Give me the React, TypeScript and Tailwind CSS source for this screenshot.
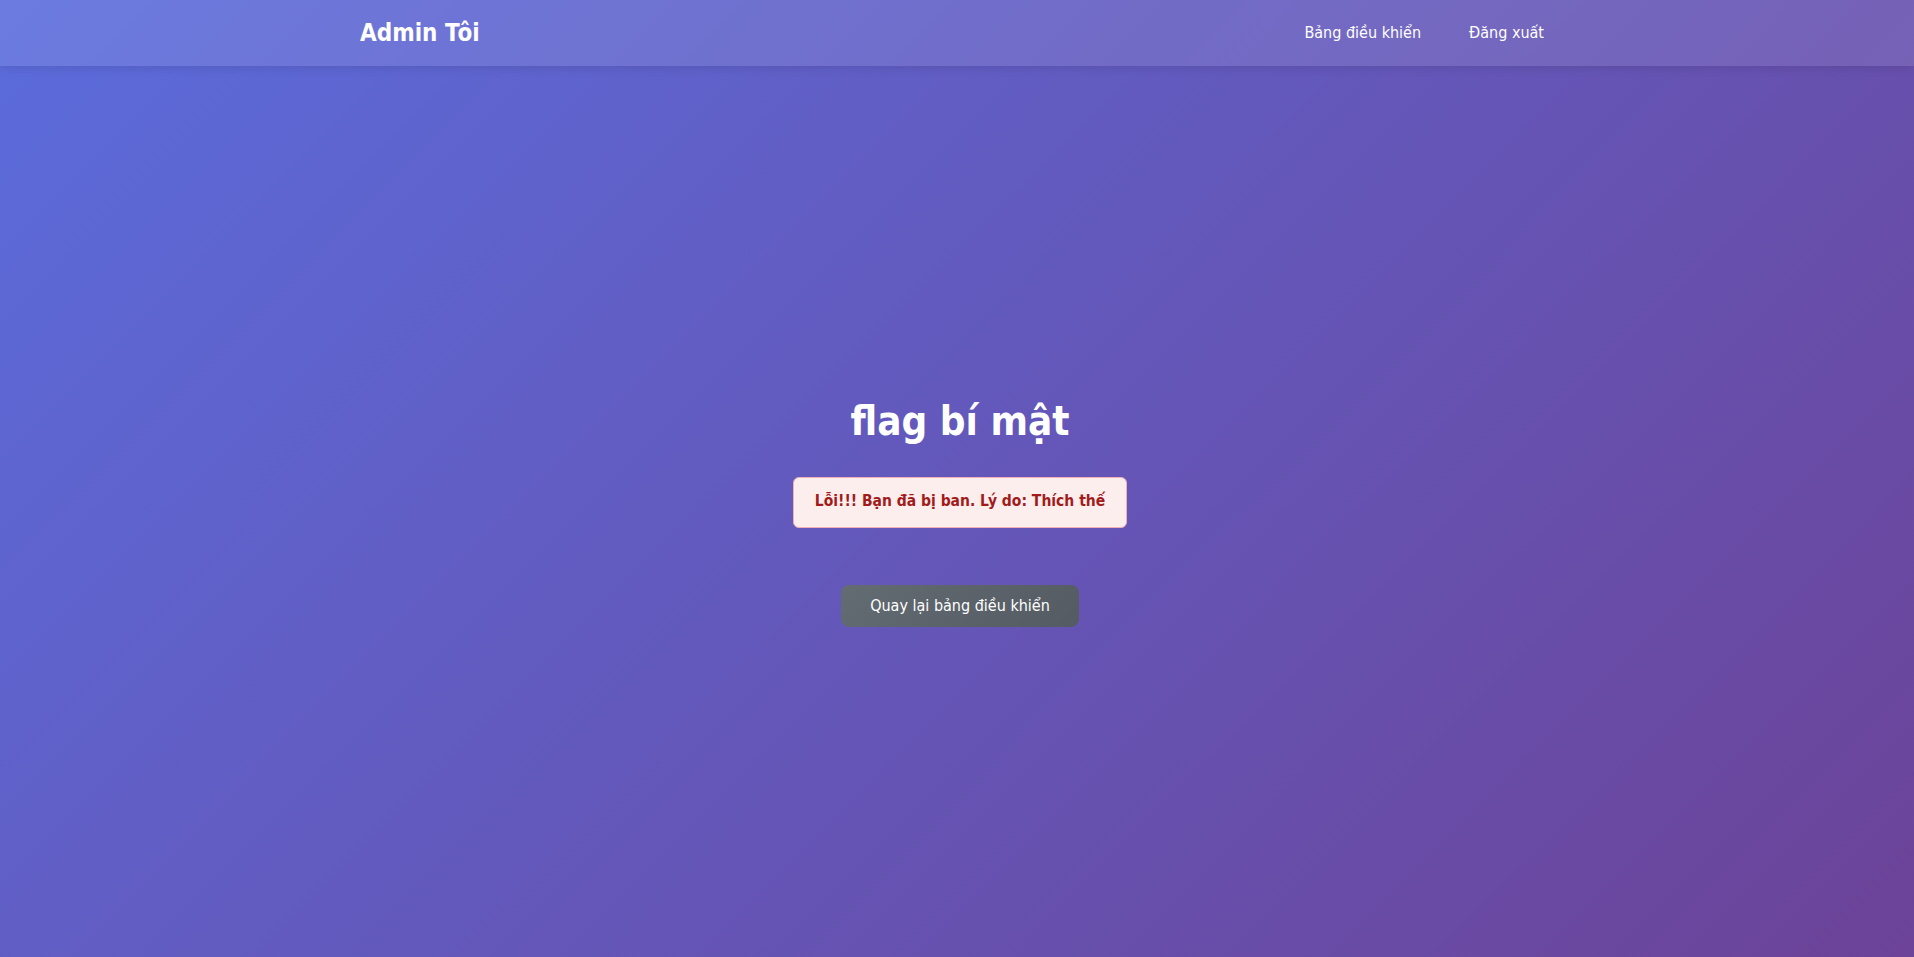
import React from "react";

export default function App() {
  const font = { fontFamily: '"DejaVu Sans Condensed", "DejaVu Sans", Tahoma, sans-serif' };
  return (
    <div
      className="min-h-screen w-full flex flex-col bg-[linear-gradient(135deg,#5b6cdc_0%,#6c4398_100%)] text-white"
      style={font}
    >
      <header className="h-[66px] shrink-0 bg-white/10 shadow-[0_2px_10px_rgba(0,0,0,0.1)]">
        <div className="w-[1200px] mx-auto h-full flex items-center justify-between pl-[3px] pr-[13px]">
          <div className="text-[24px] font-bold leading-none">Admin Tôi</div>
          <nav className="flex items-center gap-[48px] text-[16px]">
            <a className="cursor-pointer">Bảng điều khiển</a>
            <a className="cursor-pointer">Đăng xuất</a>
          </nav>
        </div>
      </header>
      <main className="flex-1 flex flex-col items-center justify-center pl-[6px]">
        <h1 className="text-[40px] font-bold leading-[48px] mb-[32px]">flag bí mật</h1>
        <div className="w-[334px] h-[51px] flex items-center justify-center rounded-[6px] border border-[#f1b0b7] bg-[#fdeeee] text-[#a11b1b] text-[15.5px] font-bold">
          Lỗi!!! Bạn đã bị ban. Lý do: Thích thế
        </div>
        <button className="mt-[57px] w-[238px] h-[42px] rounded-[8px] bg-[linear-gradient(135deg,#636b73,#545b62)] text-white text-[16px] flex items-center justify-center">
          Quay lại bảng điều khiển
        </button>
      </main>
    </div>
  );
}
